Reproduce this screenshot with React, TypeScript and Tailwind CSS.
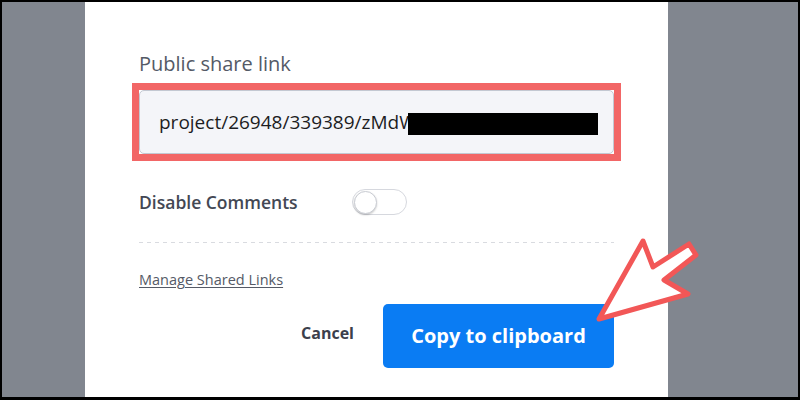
import { useState } from 'react'

const App = () => {
  const [commentsOff, setCommentsOff] = useState(false)

  return (
    <div className="relative w-[800px] h-[400px] overflow-hidden font-['Open_Sans',sans-serif]">
      <div className="flex h-full border-2 border-b-[3px] border-black bg-[#81868f]">
        <div className="w-[83px] shrink-0" />

        <div className="w-[583px] shrink-0 bg-white px-[54px] pt-[48px]">
          <div className="text-[20px] leading-[28px] text-[#545a66]">Public share link</div>

          <div className="mt-[12px] outline-[7px] outline-solid outline-[#f26666]">
            <div className="flex h-[64px] items-center rounded-[5px] border border-[#c3c8d2] bg-[#f4f5f9] pl-[19px]">
              <span className="text-[19px] text-[#1d1d1f]">project/26948/339389/zMdW</span>
              <div className="-ml-[9px] mt-[4px] h-[22px] w-[190px] bg-black" />
            </div>
          </div>

          <div className="mt-[35px] flex items-center">
            <span className="w-[213px] text-[17.5px] font-semibold leading-[26px] text-[#434854]">
              Disable Comments
            </span>
            <button
              onClick={() => setCommentsOff(!commentsOff)}
              className="flex h-[26px] w-[55px] items-center rounded-full border border-[#d6d8de] bg-white px-px"
            >
              <div className="h-[23px] w-[23px] rounded-full border border-[#c9ccd3] bg-white shadow-[0_1px_2px_rgba(0,0,0,0.2)]" />
            </button>
          </div>

          <div className="mt-[27px] h-px bg-[linear-gradient(to_right,#d9dbe0_50%,transparent_50%)] bg-[length:8px_1px]" />

          <div className="mt-[27px] text-[14.5px] leading-[20px] text-[#555a66] underline underline-offset-2">
            Manage Shared Links
          </div>

          <div className="mt-[14px] flex items-center justify-end gap-[29px]">
            <span className="-mt-[6px] text-[16px] font-bold text-[#3b3f4c]">Cancel</span>
            <button className="h-[64px] w-[231px] rounded-[5px] bg-[#0a7cf3] text-[20px] font-bold text-white">
              Copy to clipboard
            </button>
          </div>
        </div>

        <div className="flex-1" />
      </div>

      <svg
        className="pointer-events-none absolute left-0 top-0"
        width="800"
        height="400"
        viewBox="0 0 800 400"
      >
        <polygon
          points="599,319 643,241 653,267 689,244 696,255 664,280 688,294"
          fill="white"
          stroke="#f25757"
          strokeWidth="5"
          strokeLinejoin="round"
        />
      </svg>
    </div>
  )
}

export default App
